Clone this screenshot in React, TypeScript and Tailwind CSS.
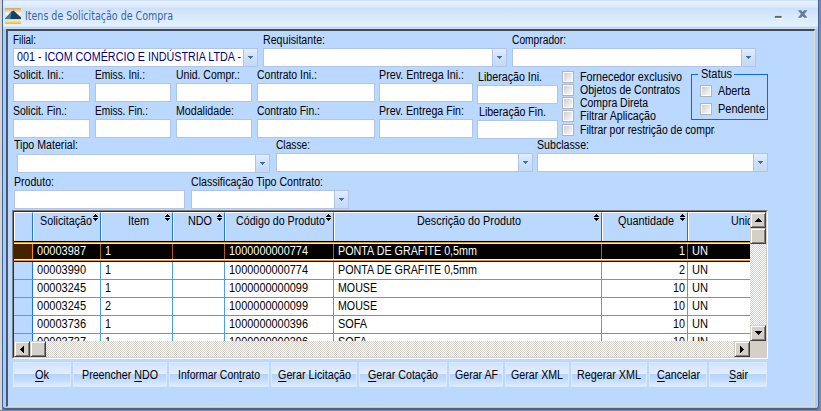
import { useLayoutEffect, useRef, type ReactNode } from 'react';
import clsx from 'clsx';

/** Condenses or stretches its text horizontally to the given width. */
function Fit({ w, children, className }: { w: number; children: ReactNode; className?: string }) {
  const inner = useRef<HTMLSpanElement>(null);
  useLayoutEffect(() => {
    const el = inner.current;
    if (el && el.offsetWidth) {
      el.style.transform = `scaleX(${(w + 1) / el.getBoundingClientRect().width})`;
    }
    return () => {
      if (el) el.style.transform = '';
    };
  }, [w]);
  return (
    <span className={clsx('block shrink-0 whitespace-nowrap', className)} style={{ width: w }}>
      <span ref={inner} className="-ml-[0.5px] inline-block origin-left whitespace-nowrap">
        {children}
      </span>
    </span>
  );
}

function DropButton() {
  return (
    <span className="flex w-[14px] shrink-0 items-center justify-center border-l border-[#b1c4e8] bg-linear-to-b from-[#e3eefd] via-[#cfe0f8] to-[#c5daf7]">
      <svg width="5" height="3" shapeRendering="crispEdges" className="fill-[#3f6fb0]">
        <path d="M0 0h5v1H4v1H3v1H2V2H1V1H0z" />
      </svg>
    </span>
  );
}

type FieldProps = {
  label: string;
  lw: number;
  className: string;
  select?: boolean;
  value?: ReactNode;
  labelClass?: string;
  boxClass?: string;
};

function Field({ label, lw, className, select, value, labelClass, boxClass }: FieldProps) {
  return (
    <div className={clsx('flex shrink-0 flex-col', className)}>
      <div className={clsx('h-4 leading-4', labelClass)}>
        <Fit w={lw}>{label}</Fit>
      </div>
      <div className={clsx('flex h-[19px] border border-[#b1c4e8] bg-white', boxClass)}>
        <div className="flex-1 pl-[3px] leading-[17px] text-[#000080]">{value}</div>
        {select && <DropButton />}
      </div>
    </div>
  );
}

function Check({ label, w, className }: { label: string; w: number; className?: string }) {
  return (
    <div className={clsx('flex items-center', className)}>
      <span className="flex size-3 shrink-0 border border-[#aab4c4] bg-white p-px">
        <span className="flex-1 bg-linear-to-br from-[#cfcfd4] to-[#fafafa]" />
      </span>
      <Fit w={w} className="ml-1.5">
        {label}
      </Fit>
    </div>
  );
}

const SortIcon = () => (
  <svg width="5" height="8" shapeRendering="crispEdges" className="absolute top-[1px] right-[2px]">
    <path d="M2 0h1v1h1v1h1v1H0V2h1V1h1zM0 4h5v1H4v1H3v1H2V6H1V5H0z" />
  </svg>
);

const columns = [
  { label: 'Solicitação', lw: 51, width: 'w-[68px]', pad: 'pl-[6px]' },
  { label: 'Item', lw: 20, width: 'w-[72px]', pad: 'pl-[26px]' },
  { label: 'NDO', lw: 23, width: 'w-[52px]', pad: 'pl-[14px]' },
  { label: 'Código do Produto', lw: 88, width: 'w-[109px]', pad: 'pl-[10px]' },
  { label: 'Descrição do Produto', lw: 103, width: 'w-[268px]', pad: 'pl-[82px]' },
  { label: 'Quantidade', lw: 55, width: 'w-[86px]', pad: 'pl-[15px]' },
];

const rows = [
  { sol: '00003987', item: '1', cod: '1000000000774', desc: 'PONTA DE GRAFITE 0,5mm', dw: 138, qty: '1' },
  { sol: '00003990', item: '1', cod: '1000000000774', desc: 'PONTA DE GRAFITE 0,5mm', dw: 138, qty: '2' },
  { sol: '00003245', item: '1', cod: '1000000000099', desc: 'MOUSE', dw: 38, qty: '10' },
  { sol: '00003245', item: '2', cod: '1000000000099', desc: 'MOUSE', dw: 38, qty: '10' },
  { sol: '00003736', item: '1', cod: '1000000000396', desc: 'SOFA', dw: 28, qty: '10' },
  { sol: '00003737', item: '1', cod: '1000000000396', desc: 'SOFA', dw: 28, qty: '10' },
];

function Row({ row, selected }: { row: (typeof rows)[number]; selected: boolean }) {
  const cell = clsx('flex h-full shrink-0 items-center border-r pl-1', selected ? 'border-[#b06010]' : 'border-[#4a9cf5]');
  const body = (
    <div className={clsx('flex leading-[17px]', selected ? 'h-[15px] bg-black text-white' : 'h-[17px]')}>
      <div
        className={clsx(
          'w-[19px] shrink-0 border-r',
          selected ? 'border-[#ff8c00] bg-[#452300]' : 'border-[#1a73e8] bg-[#bbd9ff]',
        )}
      />
      <div className={clsx(cell, 'w-[68px]')}><Fit w={48}>{row.sol}</Fit></div>
      <div className={clsx(cell, 'w-[72px]')}><Fit w={5}>{row.item}</Fit></div>
      <div className={clsx(cell, 'w-[52px]')} />
      <div className={clsx(cell, 'w-[109px]')}><Fit w={78}>{row.cod}</Fit></div>
      <div className={clsx(cell, 'w-[268px]')}><Fit w={row.dw}>{row.desc}</Fit></div>
      <div className={clsx(cell, 'w-[86px] justify-end pr-[3px]')}><Fit w={row.qty.length * 6 - 1}>{row.qty}</Fit></div>
      <div className="flex h-full items-center pl-1"><Fit w={15}>UN</Fit></div>
    </div>
  );
  if (!selected) return <div className="h-[18px] shrink-0 border-b border-[#4a9cf5]">{body}</div>;
  return (
    <div className="shrink-0 border-y border-black bg-[#e88a1a]">
      <div className="border-y border-[#f08c1c]">
        <div className="border-y border-white">{body}</div>
      </div>
    </div>
  );
}

const bevel = 'flex shrink-0 items-center justify-center border border-t-[#d4d0c8] border-l-[#d4d0c8] border-r-[#404040] border-b-[#404040] bg-[#d4d0c8] shadow-[inset_1px_1px_0_#fff,inset_-1px_-1px_0_#808080]';
const track = 'bg-[#ebe9e5] bg-[repeating-conic-gradient(#d4d0c8_0_25%,#fff_0_50%)] bg-size-[2px_2px]';

function Arrow({ d, w, h }: { d: string; w: number; h: number }) {
  return (
    <svg width={w} height={h} shapeRendering="crispEdges">
      <path d={d} />
    </svg>
  );
}

function Table() {
  return (
    <div className="ml-1 flex h-[149px] w-[756px] flex-col border-t border-r border-b border-l border-t-[#808080] border-r-white border-b-white border-l-[#808080]">
      <div className="flex h-[147px] flex-col border-t border-r border-b border-l border-t-[#303030] border-r-[#d4d0c8] border-b-[#d4d0c8] border-l-[#303030]">
        <div className="flex h-[129px] shrink-0">
          <div className="flex w-[736px] shrink-0 flex-col overflow-hidden bg-white">
            <div className="flex h-[29px] shrink-0 bg-[#bbd9ff] leading-4">
              <div className="w-[19px] shrink-0 border-t border-l border-r border-t-white border-l-white border-r-[#1a73e8]" />
              {columns.map((c) => (
                <div key={c.label} className={clsx('relative shrink-0 border-t border-r border-l border-t-white border-r-[#1a73e8] border-l-white', c.width, c.pad)}>
                  <Fit w={c.lw}>{c.label}</Fit>
                  <SortIcon />
                </div>
              ))}
              <div className="flex-1 overflow-hidden border-t border-l border-white pl-[42px]">
                <Fit w={39}>Unidade</Fit>
              </div>
            </div>
            {rows.map((r, i) => (
              <Row key={i} row={r} selected={i === 0} />
            ))}
          </div>
          <div className={clsx('flex flex-1 flex-col', track)}>
            <div className={clsx(bevel, 'h-4')}><Arrow w={7} h={4} d="M3 0h1v1h1v1h1v1h1v1H0V3h1V2h1V1h1z" /></div>
            <div className={clsx(bevel, 'h-4')} />
            <div className="flex-1" />
            <div className={clsx(bevel, 'h-4')}><Arrow w={7} h={4} d="M0 0h7v1H6v1H5v1H4v1H3V3H2V2H1V1H0z" /></div>
          </div>
        </div>
        <div className="flex flex-1">
          <div className={clsx('flex w-[736px] shrink-0', track)}>
            <div className={clsx(bevel, 'w-4')}><Arrow w={4} h={7} d="M3 0h1v7H3V6H2V5H1V4H0V3h1V2h1V1h1z" /></div>
            <div className={clsx(bevel, 'w-4')} />
            <div className="flex-1" />
            <div className={clsx(bevel, 'w-4')}><Arrow w={4} h={7} d="M0 0h1v1h1v1h1v1h1v1H3v1H2v1H1v1H0z" /></div>
          </div>
          <div className="flex-1 bg-[#d4d0c8]" />
        </div>
      </div>
    </div>
  );
}

const buttons: { w: string; tw: number; text: [string, string, string] }[] = [
  { w: 'w-[58px]', tw: 13, text: ['', 'O', 'k'] },
  { w: 'w-[94px]', tw: 75, text: ['Preencher ', 'N', 'DO'] },
  { w: 'w-[100px]', tw: 81, text: ['Informar Con', 't', 'rato'] },
  { w: 'w-[86px]', tw: 72, text: ['', 'G', 'erar Licitação'] },
  { w: 'w-[88px]', tw: 69, text: ['', 'G', 'erar Cotação'] },
  { w: 'w-[54px]', tw: 42, text: ['Gerar AF', '', ''] },
  { w: 'w-[64px]', tw: 51, text: ['Gerar XML', '', ''] },
  { w: 'w-[76px]', tw: 63, text: ['Regerar XML', '', ''] },
  { w: 'w-[58px]', tw: 42, text: ['', 'C', 'ancelar'] },
  { w: 'w-[58px]', tw: 18, text: ['', 'S', 'air'] },
];

function TitleBar() {
  return (
    <div className="flex h-[29px] shrink-0 items-start border-t border-[#cfe0f7] bg-[linear-gradient(#e8f2fe_0,#dbe9fb_6px,#cde0fa_7px,#e5f1fe_25px,#a9cdf3_27px,#e8f2fc_28px)] pt-[7px] pl-[2px]">
      <svg width="16" height="16" viewBox="0 0 16 16">
        <defs>
          <linearGradient id="sky" x1="0" y1="0" x2="0" y2="1">
            <stop offset="0" stopColor="#d0a860" />
            <stop offset=".35" stopColor="#fff8e8" />
            <stop offset=".68" stopColor="#a8c8d8" />
            <stop offset=".75" stopColor="#fff0b8" />
            <stop offset="1" stopColor="#e8b838" />
          </linearGradient>
        </defs>
        <path d="M0 0h16v16H0z" fill="url(#sky)" />
        <path d="M0 11 6.500 3.500 8.500 2.500 16 9.500V11z" fill="#173f68" />
        <path d="M0 11 6.500 3.500 5.500 11z" fill="#2f82ad" />
      </svg>
      <Fit w={147} className="ml-1 font-['DejaVu_Sans',sans-serif] text-[11.5px] leading-4 text-[#3465a8]">
        Itens de Solicitação de Compra
      </Fit>
      <div className="ml-auto flex w-[60px]">
        <svg width="48" height="13" viewBox="0 0 48 13" className="ml-[14px]">
          <path d="M4 10h7v1H4zM27 10h4v1h-4zM34 10h4v1h-4z" fill="#fff" />
          <path d="M3 8h7v2H3z" fill="#5d6378" />
          <path d="M27 2h3.500l1.500 2L33.500 2H37l-3.200 4L37 10h-3.500L32 8l-1.500 2H27l3.200-4z" fill="#647ba0" />
        </svg>
      </div>
    </div>
  );
}

export default function App() {
  return (
    <div className="flex h-[411px] w-[821px] overflow-hidden bg-[#85858d] pb-[1px] font-['Liberation_Sans',Arial,sans-serif] text-[12px] text-black">
      <div className="w-[2px] shrink-0 bg-[#d8d4cc]" />
      <div className="flex w-[817px] shrink-0 flex-col rounded-b border-r border-b-2 border-l border-[#3c64a6] bg-[#a9cbf5]">
        <TitleBar />
        <div className="mr-[3px] ml-[3px] flex h-[378px] flex-col border-t-2 border-r border-b border-l-2 border-t-[#45484c] border-r-[#e4dccb] border-b-[#e4dccb] border-l-[#45566d] bg-[#bbd9ff]">
          <div className="flex pt-[1px] pl-[5px]">
            <Field label="Filial:" lw={22} className="w-[245px]" select value={<Fit w={223}>001 - ICOM COMÉRCIO E INDÚSTRIA LTDA -</Fit>} />
            <Field label="Requisitante:" lw={61} className="ml-[5px] w-[244px]" select />
            <Field label="Comprador:" lw={53} className="ml-[5px] w-[244px]" select />
          </div>

          <div className="flex h-[70px] pl-[5px]">
            <div className="flex flex-col gap-[1px]">
              <div className="flex">
                <Field label="Solicit. Ini.:" lw={50} className="w-[77px]" />
                <Field label="Emiss. Ini.:" lw={49} className="ml-[5px] w-[76px]" />
                <Field label="Unid. Compr.:" lw={63} className="ml-[5px] w-[76px]" />
                <Field label="Contrato Ini.:" lw={59} className="ml-[5px] w-[118px]" />
                <Field label="Prev. Entrega Ini.:" lw={84} className="ml-1 w-[94px]" />
              </div>
              <div className="flex">
                <Field label="Solicit. Fin.:" lw={53} className="w-[77px]" />
                <Field label="Emiss. Fin.:" lw={52} className="ml-[5px] w-[76px]" />
                <Field label="Modalidade:" lw={57} className="ml-[5px] w-[76px]" />
                <Field label="Contrato Fin.:" lw={62} className="ml-[5px] w-[118px]" />
                <Field label="Prev. Entrega Fin:" lw={84} className="ml-1 w-[94px]" />
              </div>
            </div>
            <div className="ml-1 flex flex-col pt-[2px]">
              <Field label="Liberação Ini." lw={63} className="w-[81px]" labelClass="pl-[1px]" />
              <Field label="Liberação Fin." lw={66} className="w-[81px]" labelClass="pl-[2px]" />
            </div>
            <div className="ml-1 flex w-[153px] flex-col overflow-hidden leading-[14px]">
              <Check label="Fornecedor exclusivo" w={101} className="mt-[3px] h-[13px]" />
              <Check label="Objetos de Contratos" w={99} className="h-[13px]" />
              <Check label="Compra Direta" w={67} className="h-[13px]" />
              <Check label="Filtrar Aplicação" w={75} className="h-[14px]" />
              <Check label="Filtrar por restrição de compra" w={139} className="h-[14px]" />
            </div>
            <div className="relative -ml-[24px] mt-[7px] h-[46px] w-[77px] border border-[#0a66f0] pt-[9px] pl-2">
              <div className="absolute -top-[7px] left-[6px] flex h-[13px] w-[36px] items-end overflow-hidden bg-[#bbd9ff] pl-[3px] leading-[14px]">
                <Fit w={30}>Status</Fit>
              </div>
              <Check label="Aberta" w={31} className="h-[14px]" />
              <Check label="Pendente" w={46} className="mt-1 h-[14px]" />
            </div>
          </div>

          <div className="flex h-[36px] pl-[6px]">
            <Field label="Tipo Material:" lw={63} className="w-[256px]" boxClass="ml-[3px]" labelClass="mb-px" select />
            <Field label="Classe:" lw={33} className="ml-[6px] w-[257px]" select />
            <Field label="Subclasse:" lw={51} className="ml-1 w-[231px]" select />
          </div>
          <div className="flex h-[37px] pt-[1px] pl-[6px]">
            <Field label="Produto:" lw={39} className="w-[171px]" />
            <Field label="Classificação Tipo Contrato:" lw={131} className="ml-[6px] w-[158px]" select />
          </div>

          <Table />

          <div className="mt-[3px] ml-[5px] flex gap-[2px]">
            {buttons.map(({ w, tw, text }) => (
              <button key={text.join('')} className={clsx('flex h-[25px] shrink-0 items-center justify-center border border-[#dceaff] bg-[linear-gradient(#cfe2ff_0,#e4effe_48%,#b5d3fd_50%,#c4ddff_75%,#dcebff_100%)]', w)}>
                <Fit w={tw}>
                  {text[0]}
                  <span className="underline underline-offset-2">{text[1]}</span>
                  {text[2]}
                </Fit>
              </button>
            ))}
          </div>
        </div>
      </div>
    </div>
  );
}
